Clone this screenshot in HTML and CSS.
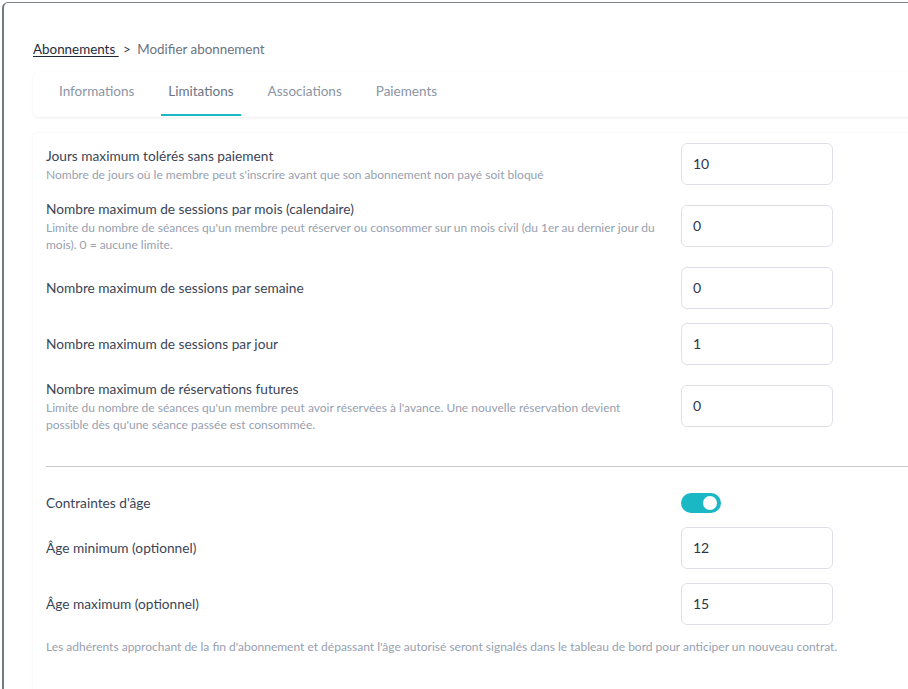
FILE: index.html
```html
<!DOCTYPE html>
<html lang="fr">
<head>
<meta charset="utf-8">
<title>Modifier abonnement</title>
<link rel="stylesheet" href="styles.css">
</head>
<body>
<div class="frame">
  <nav class="crumbs">
    <a class="crumb-link" href="#">Abonnements&nbsp;</a>
    <span class="crumb-sep">&gt;</span>
    <span class="crumb-current">Modifier abonnement</span>
  </nav>

  <div class="tabs">
    <div class="tab">Informations</div>
    <div class="tab active">Limitations</div>
    <div class="tab">Associations</div>
    <div class="tab">Paiements</div>
  </div>

  <section class="card">
    <div class="rows">
      <div class="row">
        <div class="text">
          <div class="label">Jours maximum tolérés sans paiement</div>
          <div class="desc">Nombre de jours où le membre peut s'inscrire avant que son abonnement non payé soit bloqué</div>
        </div>
        <div class="field">10</div>
      </div>
      <div class="row">
        <div class="text">
          <div class="label">Nombre maximum de sessions par mois (calendaire)</div>
          <div class="desc">Limite du nombre de séances qu'un membre peut réserver ou consommer sur un mois civil (du 1er au dernier jour du mois). 0 = aucune limite.</div>
        </div>
        <div class="field">0</div>
      </div>
      <div class="row">
        <div class="text">
          <div class="label">Nombre maximum de sessions par semaine</div>
        </div>
        <div class="field">0</div>
      </div>
      <div class="row">
        <div class="text">
          <div class="label">Nombre maximum de sessions par jour</div>
        </div>
        <div class="field">1</div>
      </div>
      <div class="row">
        <div class="text">
          <div class="label">Nombre maximum de réservations futures</div>
          <div class="desc">Limite du nombre de séances qu'un membre peut avoir réservées à l'avance. Une nouvelle réservation devient possible dès qu'une séance passée est consommée.</div>
        </div>
        <div class="field">0</div>
      </div>
    </div>

    <hr class="divider">

    <div class="rows age">
      <div class="row">
        <div class="text"><div class="label">Contraintes d'âge</div></div>
        <div class="toggle-cell"><span class="toggle"><span class="knob"></span></span></div>
      </div>
      <div class="row">
        <div class="text"><div class="label">Âge minimum (optionnel)</div></div>
        <div class="field">12</div>
      </div>
      <div class="row">
        <div class="text"><div class="label">Âge maximum (optionnel)</div></div>
        <div class="field">15</div>
      </div>
    </div>
    <p class="note">Les adhérents approchant de la fin d'abonnement et dépassant l'âge autorisé seront signalés dans le tableau de bord pour anticiper un nouveau contrat.</p>
  </section>
</div>
</body>
</html>
```

FILE: styles.css
```css
html, body {
  margin: 0;
  padding: 0;
  background: #ffffff;
  overflow: hidden;
}
body {
  width: 908px;
  height: 689px;
  font-family: "Lato", "Open Sans", sans-serif;
  color: #3b4556;
}
.frame {
  margin: 2px 0 0 2px;
  height: 687px;
  border-top: 1px solid #7f8489;
  border-left: 2px solid #74797e;
  border-top-left-radius: 6px;
  padding: 37px 0 0 29px;
  box-sizing: border-box;
  overflow: hidden;
}
.crumbs {
  font-size: 13.4px;
  line-height: 18px;
  height: 18px;
  color: #6b7280;
}
.crumb-link {
  color: #1f2937;
  text-decoration: underline;
  text-underline-offset: 2px;
}
.crumb-sep {
  color: #374151;
  margin: 0 3px 0 1px;
}
.tabs {
  margin-top: 14px;
  width: 920px;
  height: 45px;
  display: flex;
  gap: 20px;
  padding-left: 19px;
  box-sizing: border-box;
  border-radius: 6px 0 0 6px;
  box-shadow: 0 1px 3px rgba(0, 0, 0, 0.07);
  background: #fff;
}
.tab {
  padding: 0 7px;
  height: 44px;
  box-sizing: border-box;
  font-size: 13.5px;
  line-height: 39px;
  color: #8b95a5;
  border-bottom: 2px solid transparent;
}
.tab.active {
  color: #6b7585;
  border-bottom-color: #1ab8c4;
}
.card {
  margin-top: 16px;
  width: 940px;
  height: 600px;
  padding: 10px 0 0 13px;
  box-sizing: border-box;
  border-radius: 4px 0 0 0;
  box-shadow: 0 0 3px rgba(0, 0, 0, 0.06);
  background: #fff;
}
.rows {
  display: flex;
  flex-direction: column;
  gap: 14px;
}
.row {
  display: grid;
  grid-template-columns: 615px 152px;
  column-gap: 20px;
  align-items: center;
}
.label {
  font-size: 13.7px;
  line-height: 20px;
  color: #3b4556;
}
.desc {
  font-size: 12px;
  line-height: 17px;
  color: #97a0b0;
}
.field {
  height: 42px;
  box-sizing: border-box;
  border: 1px solid #dde1e7;
  border-radius: 6px;
  padding-left: 11px;
  font-size: 14px;
  line-height: 40px;
  color: #2d3748;
  background: #fff;
}
.divider {
  margin: 33px 0 0 0;
  border: 0;
  border-top: 1px solid #c8ccd1;
  height: 0;
}
.age {
  margin-top: 26px;
}
.toggle-cell {
  height: 20px;
  display: flex;
  align-items: center;
}
.toggle {
  width: 40px;
  height: 20px;
  border-radius: 10px;
  background: #1ab8c4;
  display: flex;
  align-items: center;
  justify-content: flex-end;
  padding-right: 4px;
  box-sizing: border-box;
}
.knob {
  width: 14px;
  height: 14px;
  border-radius: 50%;
  background: #fff;
}
.note {
  margin: 13px 0 0 0;
  font-size: 12px;
  line-height: 17px;
  color: #97a0b0;
}
```
